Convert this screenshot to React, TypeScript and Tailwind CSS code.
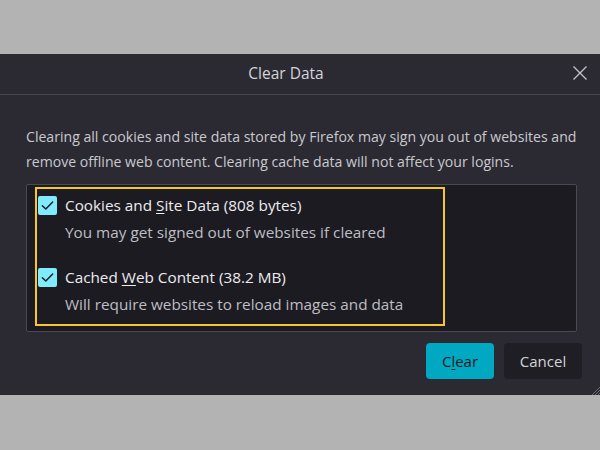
type Item = {
  before: string;
  key: string;
  after: string;
  hint: string;
};

const ITEMS: Item[] = [
  {
    before: "Cookies and ",
    key: "S",
    after: "ite Data (808 bytes)",
    hint: "You may get signed out of websites if cleared",
  },
  {
    before: "Cached ",
    key: "W",
    after: "eb Content (38.2 MB)",
    hint: "Will require websites to reload images and data",
  },
];

const CheckBox = () => (
  <div className="w-[19px] h-[19px] rounded-[2px] bg-[#80ebff] flex items-center justify-center shrink-0">
    <svg width="15" height="15" viewBox="0 0 16 16" fill="none">
      <path
        d="M2.5 8.2 L6.2 11.8 L13.5 4.2"
        stroke="#1c1b22"
        strokeWidth="1.6"
        strokeLinecap="round"
        strokeLinejoin="round"
      />
    </svg>
  </div>
);

const App = () => {
  return (
    <div
      className="w-[600px] h-[450px] bg-[#b3b3b3] pt-[54px] overflow-hidden"
      style={{ fontFamily: '"Open Sans", "Noto Sans", sans-serif' }}
    >
      <div className="relative h-[341px] bg-[#2b2a33] flex flex-col">
        {/* Title bar */}
        <div className="relative h-[41px] border-b border-[#45444c] flex items-center justify-center pr-[28px]">
          <span className="text-[15.5px] text-[#d4d4d8]">Clear Data</span>
          <svg
            className="absolute right-[13px] top-[12px]"
            width="14"
            height="14"
            viewBox="0 0 14 14"
          >
            <path d="M0.5 0.5 L13.5 13.5 M13.5 0.5 L0.5 13.5" stroke="#c4c4c8" strokeWidth="1.3" />
          </svg>
        </div>

        {/* Body */}
        <div className="px-[26px] pt-[29px]">
          <p className="text-[14.1px] leading-[25px] text-[#c9c9cd] whitespace-nowrap">
            Clearing all cookies and site data stored by Firefox may sign you out of websites and
            <br />
            remove offline web content. Clearing cache data will not affect your logins.
          </p>

          <div className="mt-[10px] h-[148px] w-[551px] bg-[#1c1b22] border border-[#4b4a52] rounded-[2px] pl-[8px] pt-[2px]">
            <div className="w-[410px] h-[139px] border-2 border-[#f8c630] pl-[1px] pt-[5px]">
              {ITEMS.map((item, i) => (
                <div key={item.key} className={i === 0 ? "" : "mt-[23px]"}>
                  <div className="flex items-center gap-[8px] h-[22px]">
                    <CheckBox />
                    <span className="text-[15.3px] leading-[22px] text-[#ececee] whitespace-nowrap">
                      {item.before}
                      <span className="underline underline-offset-2">{item.key}</span>
                      {item.after}
                    </span>
                  </div>
                  <div className="pl-[27px] mt-[5px] text-[15.3px] leading-[22px] text-[#bebec3] whitespace-nowrap">
                    {item.hint}
                  </div>
                </div>
              ))}
            </div>
          </div>

          {/* Buttons */}
          <div className="flex justify-end gap-[10px] mt-[11px] mr-[-8px]">
            <button className="w-[68px] h-[36px] rounded-[4px] bg-[#00a8c2] text-[15px] text-[#1c1b22]">
              C<span className="underline underline-offset-2">l</span>ear
            </button>
            <button className="w-[78px] h-[36px] rounded-[4px] bg-[#1f1e25] text-[15px] text-[#d4d4d8]">
              Cancel
            </button>
          </div>
        </div>

        {/* resize grip */}
        <svg
          className="absolute right-0 bottom-0"
          width="10"
          height="10"
          viewBox="0 0 10 10"
        >
          <path d="M10 2 L2 10 M10 5 L5 10 M10 8 L8 10" stroke="#6b6a72" strokeWidth="1" />
        </svg>
      </div>
    </div>
  );
};

export default App;
